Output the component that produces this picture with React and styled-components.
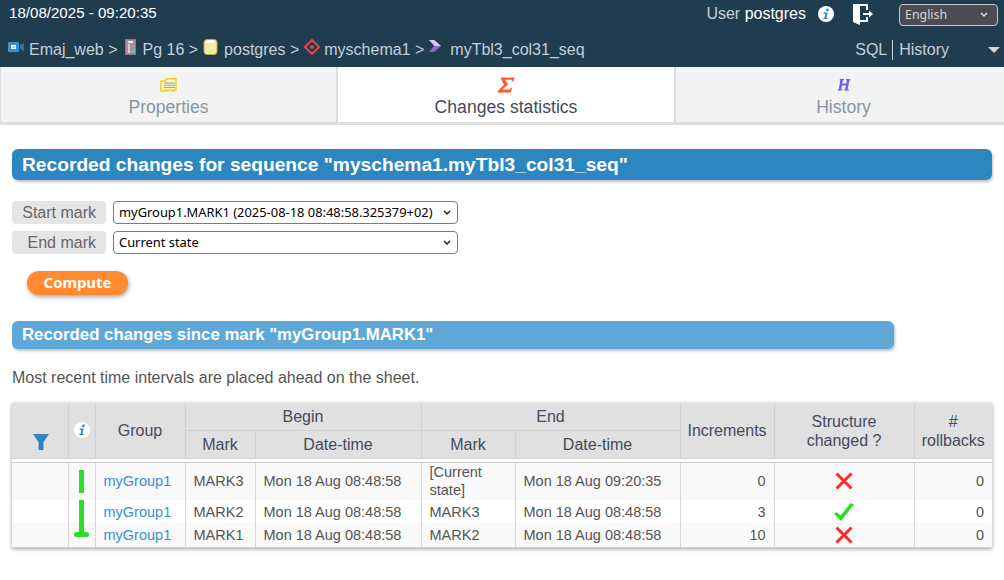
import React from 'react';
import styled, { createGlobalStyle } from 'styled-components';

const chevron = (color) =>
  `url("data:image/svg+xml,%3Csvg xmlns='http://www.w3.org/2000/svg' width='8' height='6'%3E%3Cpath d='M1 1l3 3 3-3' fill='none' stroke='%23${color}' stroke-width='1.5'/%3E%3C/svg%3E")`;

const GlobalStyle = createGlobalStyle`
  html, body {
    margin: 0;
    background: #fff;
    color: #444;
    font-family: "Liberation Sans", Arial, sans-serif;
    font-size: 16px;
  }
`;

const TopBar = styled.header`
  background: #203d50;
  height: 67px;
  display: flex;
  flex-direction: column;
`;

const TopRow = styled.div`
  display: flex;
  justify-content: space-between;
  height: 33px;
  padding: 0 6px 0 9px;
`;

const Clock = styled.span`
  color: #fff;
  font-size: 15.1px;
  line-height: 26px;
`;

const UserZone = styled.div`
  display: flex;
  align-items: flex-start;
`;

const UserName = styled.span`
  color: #c5ced6;
  line-height: 27px;
  margin-right: 12px;

  b {
    color: #fff;
    font-weight: 400;
  }
`;

const InfoGlyph = ({ className }) => (
  <svg className={className} viewBox="0 0 16 16">
    <circle cx="8" cy="8" r="8" fill="#fff" />
    <circle cx="9.4" cy="3.9" r="1.4" fill="#2e86c1" />
    <path d="M5.8 6.6h3.9l-1.3 5.2h1.3l-.3 1.2H5.2l.3-1.2h1l1-4h-1.9z" fill="#2e86c1" />
  </svg>
);

const TopInfo = styled(InfoGlyph)`
  width: 16px;
  height: 16px;
  margin-top: 6px;
  margin-right: 19px;
`;

const HeadInfo = styled(InfoGlyph)`
  display: block;
  width: 16px;
  height: 16px;
  margin: 19px auto 0;
`;

const ExitIcon = styled.svg`
  width: 20px;
  height: 21px;
  margin-top: 4px;
  margin-right: 26px;
`;

const LangSelect = styled.select`
  width: 99px;
  height: 22px;
  margin-top: 4px;
  appearance: none;
  background: #4b4b55 ${chevron('d5d5d5')} no-repeat right 9px center;
  color: #d5d5d5;
  border: 1px solid #c8c8c8;
  border-radius: 4px;
  font-family: "Noto Sans", sans-serif;
  font-size: 12.4px;
  padding: 0 0 2px 5px;
`;

const CrumbRow = styled.div`
  display: flex;
  justify-content: space-between;
  height: 34px;
  padding: 0 4px 0 8px;
`;

const Crumbs = styled.div`
  display: flex;
  align-items: flex-start;
  color: #c5ced6;
  line-height: 34px;
`;

const CrumbIcon = styled.svg`
  width: 16px;
  height: 16px;
  margin-top: 6px;
  margin-right: ${({ $gap }) => $gap}px;
  flex: none;
`;

const CrumbText = styled.span`
  margin-right: ${({ $gap }) => $gap || 0}px;
  white-space: pre;
`;

const BarLinks = styled.div`
  display: flex;
  align-items: center;
  color: #c5ced6;
  height: 33px;
`;

const SqlLink = styled.span`
  padding-right: 5px;
  border-right: 1px solid #c5ced6;
  line-height: 20px;
`;

const HistoryLink = styled.span`
  padding-left: 6px;
  margin-right: 39px;
`;

const Caret = styled.i`
  width: 0;
  height: 0;
  border-left: 6px solid transparent;
  border-right: 6px solid transparent;
  border-top: 6px solid #d5d5d5;
`;

const Tabs = styled.nav`
  display: grid;
  grid-template-columns: 337px 338px 337px;
  height: 58px;
  border-bottom: 3px solid #ddd;
  box-sizing: border-box;
  overflow: hidden;
`;

const Tab = styled.div`
  display: flex;
  flex-direction: column;
  align-items: center;
  background: ${({ $active }) => ($active ? '#fff' : '#f3f3f3')};
  color: ${({ $active }) => ($active ? '#444a5c' : '#8a95a3')};
  border-left: 1px solid #ddd;
  border-right: 1px solid #ddd;
  font-size: 17.6px;
  padding-top: 10px;
  line-height: 22px;
  box-sizing: border-box;
`;

const TabIcon = styled.svg`
  width: 18px;
  height: 16px;
  margin-bottom: 3px;
`;

const Page = styled.main`
  padding: 24px 12px 20px;
`;

const Title = styled.h2`
  margin: 0 0 21px;
  height: 31px;
  line-height: 31px;
  padding-left: 10px;
  border-radius: 6px;
  background: #2e86c1;
  color: #fff;
  font-size: 19.2px;
  font-weight: 700;
  box-shadow: 1px 2px 3px rgba(0, 0, 0, 0.25);
`;

const SubTitle = styled.h3`
  margin: 0 0 20px;
  width: 872px;
  height: 28px;
  line-height: 28px;
  padding-left: 10px;
  border-radius: 6px;
  background: #5fa7d6;
  color: #fff;
  font-size: 16.8px;
  font-weight: 700;
  box-shadow: 1px 2px 3px rgba(0, 0, 0, 0.25);
`;

const MarkRow = styled.div`
  display: flex;
  align-items: center;
  gap: 7px;
  margin-bottom: 7px;
`;

const MarkLabel = styled.label`
  width: 84px;
  height: 23px;
  line-height: 23px;
  padding-right: 10px;
  text-align: right;
  background: #e5e5e5;
  border-radius: 4px;
  color: #666;
`;

const MarkSelect = styled.select`
  width: 345px;
  height: 23px;
  appearance: none;
  background: #fff ${chevron('222222')} no-repeat right 6px center;
  color: #000;
  border: 1px solid #4f86b5;
  border-radius: 4px;
  font-family: "Noto Sans", sans-serif;
  font-size: 12.9px;
  padding: 0 0 2px 5px;
`;

const ComputeButton = styled.button`
  display: block;
  margin: 17px 0 26px 15px;
  width: 101px;
  height: 24px;
  border: 0;
  border-radius: 12px;
  background: #ff8a2f;
  color: #fff;
  font-family: "Noto Sans", sans-serif;
  font-weight: 700;
  font-size: 14.9px;
  padding: 0 0 2px;
  box-shadow: 1px 2px 4px rgba(0, 0, 0, 0.35);
`;

const Note = styled.p`
  margin: 0 0 16px;
  color: #555;
  line-height: 18px;
`;

const Table = styled.table`
  border-collapse: collapse;
  table-layout: fixed;
  width: 980px;
  font-size: 14.5px;
  box-shadow: 0 1px 4px rgba(0, 0, 0, 0.4);
`;

const HeadRow = styled.tr`
  height: ${({ $height }) => $height}px;
`;

const Th = styled.th`
  background: #e0e0e0;
  border: 1px solid #d0d0d0;
  border-top: 0;
  color: #444a5c;
  font-size: 16px;
  font-weight: 400;
  line-height: 19px;
  padding: ${({ $nudge }) => ($nudge ? '2px 0 0' : '0')};
  vertical-align: ${({ $align }) => $align || 'middle'};
  &:first-child { border-left: 0; }
  &:last-child { border-right: 0; }
`;

const Spacer = styled.td`
  height: 3px;
  padding: 0;
  background: #fff;
  border-top: 1px solid #ccc;
  border-bottom: 1px solid #ccc;
`;

const Tr = styled.tr`
  background: ${({ $odd }) => ($odd ? '#f9f9f9' : '#fff')};
  height: ${({ $height }) => $height}px;

  &:last-child td {
    border-bottom: 1px solid #d0d0d0;
  }
`;

const Td = styled.td`
  border: 1px solid #d8d8d8;
  border-top: 0;
  border-bottom: 0;
  padding: 0 8px;
  color: #555;
  line-height: 18px;
  text-align: ${({ $align }) => $align || 'left'};
  &:first-child { border-left: 0; }
  &:last-child { border-right: 0; }
`;

const TrackCell = styled.td`
  border: 1px solid #d8d8d8;
  border-top: 0;
  border-bottom: 0;
  padding: 0;
  vertical-align: ${({ $valign }) => $valign};
`;

const Group = styled.a`
  color: #3a8fd0;
`;

const FilterIcon = styled.svg`
  display: block;
  width: 16px;
  height: 16px;
  margin: 0 0 8px 21px;
`;

const StatusIcon = styled.svg`
  display: block;
  margin: 0 auto;
`;

const Cross = () => (
  <StatusIcon width="18" height="18" viewBox="0 0 18 18">
    <path d="M1.5 1.5l15 15M16.5 1.5l-15 15" stroke="#ff2a2a" strokeWidth="3" />
  </StatusIcon>
);

const Check = () => (
  <StatusIcon width="20" height="18" viewBox="0 0 20 18">
    <path d="M0 11l2.6-2 4 3.4L16.6 0 20 1.6 7 18z" fill="#2adf2a" />
  </StatusIcon>
);

const Bar = styled.div`
  width: 5px;
  margin: 0 auto;
  height: ${({ $h }) => $h}px;
  background: #2adf2a;
`;

const Foot = styled.div`
  width: 15px;
  height: 5px;
  margin: 0 auto;
  border-radius: 3px;
  background: #2adf2a;
`;

const rows = [
  { mark: 'MARK3', begin: 'Mon 18 Aug 08:48:58', endMark: '[Current state]', end: 'Mon 18 Aug 09:20:35', inc: 0, ok: false, h: 38, odd: true },
  { mark: 'MARK2', begin: 'Mon 18 Aug 08:48:58', endMark: 'MARK3', end: 'Mon 18 Aug 08:48:58', inc: 3, ok: true, h: 23 },
  { mark: 'MARK1', begin: 'Mon 18 Aug 08:48:58', endMark: 'MARK2', end: 'Mon 18 Aug 08:48:58', inc: 10, ok: false, h: 24, odd: true },
];

const Track = ({ index }) => {
  if (index < 2) return <Bar $h={23} />;
  return (
    <>
      <Bar $h={9} />
      <Foot />
    </>
  );
};

export default function App() {
  return (
    <>
      <GlobalStyle />
      <TopBar>
        <TopRow>
          <Clock>18/08/2025 - 09:20:35</Clock>
          <UserZone>
            <UserName>User <b>postgres</b></UserName>
            <TopInfo />
            <ExitIcon viewBox="0 0 20 21">
              <path d="M0 0h15v6h-2V2H7l-.5 0L7 2.5V16h6v-3h2v5H7v3L0 18z" fill="#fff" />
              <path d="M10 9h6V6.5L20 10l-4 3.5V11h-6z" fill="#fff" />
            </ExitIcon>
            <LangSelect defaultValue="en">
              <option value="en">English</option>
            </LangSelect>
          </UserZone>
        </TopRow>
        <CrumbRow>
          <Crumbs>
            <CrumbIcon viewBox="0 0 16 16" $gap={5}>
              <rect x="0" y="3" width="11" height="10" rx="1" fill="#3a8fd0" />
              <path d="M12 6l4-2v8l-4-2z" fill="#2a75ad" />
              <path d="M3 6h5v4H3z" fill="#fff" />
              <path d="M4.5 8h2" stroke="#3a8fd0" strokeWidth="1" />
            </CrumbIcon>
            <CrumbText $gap={7}>Emaj_web &gt;</CrumbText>
            <CrumbIcon viewBox="0 0 16 16" $gap={2}>
              <rect x="0.5" y="0.5" width="10" height="15" fill="#b58a9a" stroke="#8c7a82" />
              <rect x="3" y="2" width="5" height="2" fill="#efe6ea" />
              <rect x="3" y="5" width="2" height="9" fill="#d8c8d0" />
              <rect x="7" y="11" width="3" height="3" fill="#4cc" />
            </CrumbIcon>
            <CrumbText $gap={5}>Pg 16 &gt;</CrumbText>
            <CrumbIcon viewBox="0 0 16 16" $gap={5}>
              <rect x="1" y="0.5" width="13" height="15" rx="3" fill="#f3eba0" stroke="#b5a84f" />
              <ellipse cx="7.5" cy="2.5" rx="5" ry="1.5" fill="#fffbe0" />
            </CrumbIcon>
            <CrumbText $gap={5}>postgres &gt;</CrumbText>
            <CrumbIcon viewBox="0 0 16 16" $gap={4}>
              <path d="M8 1l7 7-7 7-7-7z" fill="none" stroke="#e04848" strokeWidth="2" />
              <circle cx="8" cy="8" r="2" fill="#e04848" />
            </CrumbIcon>
            <CrumbText $gap={4}>myschema1 &gt;</CrumbText>
            <CrumbIcon viewBox="0 0 16 16" $gap={6}>
              <path d="M1 1h5l7 6-7 6H1l5-6z" fill="#8a6cc8" />
              <path d="M1 1h5l7 6H7z" fill="#d8ccf0" />
            </CrumbIcon>
            <CrumbText>myTbl3_col31_seq</CrumbText>
          </Crumbs>
          <BarLinks>
            <SqlLink>SQL</SqlLink>
            <HistoryLink>History</HistoryLink>
            <Caret />
          </BarLinks>
        </CrumbRow>
      </TopBar>

      <Tabs>
        <Tab>
          <TabIcon viewBox="0 0 18 16">
            <path d="M1 4h5V2l10-.5V13h-2v1h-2v-1H8v1H6v-1H4v1H1z" fill="#fff8c8" stroke="#ecd21e" strokeWidth="1.4" />
            <path d="M4 6h11M4 8.2h11M4 10.4h11" stroke="#9a9a9a" strokeWidth="1" />
          </TabIcon>
          Properties
        </Tab>
        <Tab $active>
          <TabIcon viewBox="0 0 18 16">
            <path d="M4 0.5h13.5l-1 4h-1.4l.2-1.8H8.2L11 7.5 5.4 12.6h7.4l.9-1.8h1.4l-1.3 4.7H0.5l.3-1.4L7 7.8 4 2z" fill="#ff5a30" />
          </TabIcon>
          Changes statistics
        </Tab>
        <Tab>
          <TabIcon viewBox="0 0 18 16">
            <path d="M5 2h4l-.3 1.2-.9.2-.5 3h4l.5-3-.9-.2L11 2h4.5l-.3 1.2-.9.2-1.5 8.6.9.2-.2 1.2H9.2l.2-1.2.9-.2.6-3.6h-4l-.6 3.6.9.2-.2 1.2H2.7l.2-1.2.9-.2L5.3 3.4l-.9-.2z" fill="#6a62e0" />
          </TabIcon>
          History
        </Tab>
      </Tabs>

      <Page>
        <Title>Recorded changes for sequence "myschema1.myTbl3_col31_seq"</Title>
        <MarkRow>
          <MarkLabel>Start mark</MarkLabel>
          <MarkSelect defaultValue="m1">
            <option value="m1">myGroup1.MARK1 (2025-08-18 08:48:58.325379+02)</option>
          </MarkSelect>
        </MarkRow>
        <MarkRow>
          <MarkLabel>End mark</MarkLabel>
          <MarkSelect defaultValue="cur">
            <option value="cur">Current state</option>
          </MarkSelect>
        </MarkRow>
        <ComputeButton>Compute</ComputeButton>
        <SubTitle>Recorded changes since mark "myGroup1.MARK1"</SubTitle>
        <Note>Most recent time intervals are placed ahead on the sheet.</Note>
        <Table>
          <colgroup>
            <col width="56" /><col width="27" /><col width="90" /><col width="70" /><col width="166" />
            <col width="94" /><col width="165" /><col width="94" /><col width="140" /><col width="78" />
          </colgroup>
          <thead>
            <HeadRow $height={27}>
              <Th rowSpan={2} $align="bottom">
                <FilterIcon viewBox="0 0 16 16">
                  <path d="M0 0h16L10.5 8v8h-5V8z" fill="#2e86c1" />
                </FilterIcon>
              </Th>
              <Th rowSpan={2} $align="top">
                <HeadInfo />
              </Th>
              <Th rowSpan={2}>Group</Th>
              <Th colSpan={2}>Begin</Th>
              <Th colSpan={2}>End</Th>
              <Th rowSpan={2}>Increments</Th>
              <Th rowSpan={2} $nudge>Structure<br />changed ?</Th>
              <Th rowSpan={2} $nudge>#<br />rollbacks</Th>
            </HeadRow>
            <HeadRow $height={28}>
              <Th>Mark</Th>
              <Th>Date-time</Th>
              <Th>Mark</Th>
              <Th>Date-time</Th>
            </HeadRow>
            <tr><Spacer colSpan={10} /></tr>
          </thead>
          <tbody>
            {rows.map((r, i) => (
              <Tr key={r.mark} $odd={r.odd} $height={r.h}>
                <Td />
                <TrackCell $valign={i === 0 ? 'middle' : 'top'}><Track index={i} /></TrackCell>
                <Td><Group>myGroup1</Group></Td>
                <Td>{r.mark}</Td>
                <Td>{r.begin}</Td>
                <Td>{r.endMark}</Td>
                <Td>{r.end}</Td>
                <Td $align="right">{r.inc}</Td>
                <Td>{r.ok ? <Check /> : <Cross />}</Td>
                <Td $align="right">0</Td>
              </Tr>
            ))}
          </tbody>
        </Table>
      </Page>
    </>
  );
}
